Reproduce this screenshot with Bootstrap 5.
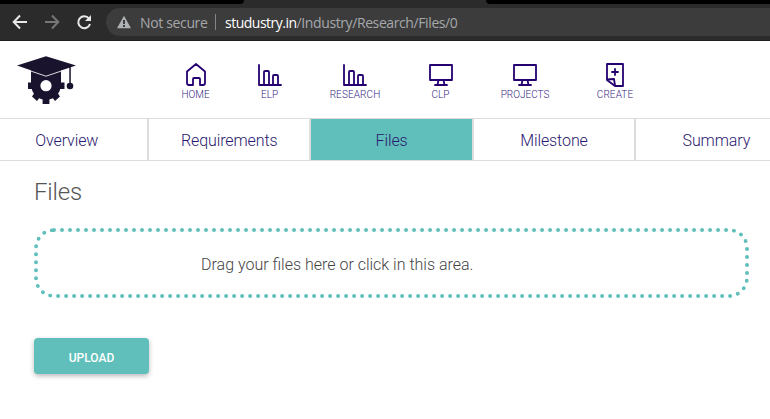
<!DOCTYPE html>
<html lang="en">
<head>
<meta charset="utf-8">
<meta name="viewport" content="width=device-width, initial-scale=1">
<title>Studustry - Files</title>
<link href="https://cdn.jsdelivr.net/npm/bootstrap@5.3.0/dist/css/bootstrap.min.css" rel="stylesheet">
<style>
body{font-family:Roboto,"Open Sans",sans-serif;font-weight:300;overflow:hidden;height:419px;background:#fff;color:#444}
.browser{height:41px;background:#2b2b2b;border-bottom:1px solid #1d1d1d}
.tabstrip{height:4px}
.strip-left{width:244px;background:#000;border-bottom-right-radius:5px}
.strip-right{width:284px;background:#000;border-bottom-left-radius:5px}
.toolbar{height:36px;padding-left:12px}
.omnibox{height:28px;margin-left:14px;background:#3c3c3c;border-radius:14px 0 0 14px;padding-left:10px;font:400 14px "Open Sans","Noto Sans",sans-serif;color:#a5a8ab;white-space:nowrap}
.omnibox .warn{letter-spacing:-.35px;width:67px;margin-left:8px}
.omnibox .sep{width:1px;height:16px;background:#83868a;margin:0 9px 0 8px}
.omnibox .host{color:#fff;letter-spacing:-.5px}
.omnibox .url{letter-spacing:-.4px}
.site-head{height:77px}
.brand{width:60px;margin:15px 0 0 16px}
.mainmenu{margin-left:105.5px;padding-top:20px;gap:51.5px}
.mainmenu a{color:#33257f;font-size:10px;line-height:12px;white-space:nowrap;display:flex;flex-direction:column;align-items:center}
.mainmenu svg{width:28px;height:28px;fill:none;stroke:#250070;stroke-width:1.8;stroke-linejoin:round;stroke-linecap:round;flex:none}
.mainmenu .m1{width:28px}.mainmenu .m2,.mainmenu .m4{width:17px}.mainmenu .m3{width:51px}.mainmenu .m5{width:49px}.mainmenu .m6{width:36px;margin-left:-4px}
.mainmenu .m3 span,.mainmenu .m6 span{letter-spacing:.1px}
.sections{height:43px;margin-left:-13.4px;width:813px;border:solid #ddd;border-width:1px 0;flex-wrap:nowrap}
.sections a{flex:0 0 162.4px;border-right:2px solid #ddd;color:#2a186f;font-size:16px;letter-spacing:-.1px;line-height:20px;padding:12px 0 0;text-align:center;border-radius:0}
.sections a.active{background:#60bfba}
.content{padding:16px 0 0 34px}
.title{font-size:24px;line-height:30px;font-weight:300;margin:0;color:#555;letter-spacing:-.2px}
.dropzone{width:715px;height:70px;margin-top:21px;border:4px dotted #60bfba;border-radius:20px;padding:3px 0 0 163px;font-size:16px;color:#444}
.upload{width:115px;height:36px;margin-top:40px;background:#60bfba;color:#fff;border:0;border-radius:4px;font-size:12px;font-weight:500;padding:3px 0 0;box-shadow:0 2px 5px rgba(0,0,0,.28)}
</style>
<script src="https://cdn.jsdelivr.net/npm/bootstrap@5.3.0/dist/js/bootstrap.bundle.min.js"></script>
</head>
<body>
<div class="browser">
  <div class="tabstrip d-flex justify-content-between"><div class="strip-left"></div><div class="strip-right"></div></div>
  <div class="toolbar d-flex align-items-center">
    <svg width="80" height="16" viewBox="0 0 80 16" fill="none" stroke-width="2">
      <path d="M15 8H2M8 1.500 1.700 8 8 14.500" stroke="#e8e8e8"/>
      <path d="M33 8h13M40 1.500 46.300 8 40 14.500" stroke="#777"/>
      <path d="M77 4.500A6 6 0 1 0 78 10" stroke="#e8e8e8"/><path d="M79 1v6h-6z" fill="#e8e8e8"/>
    </svg>
    <div class="omnibox d-flex align-items-center flex-grow-1">
      <svg width="16" height="14" viewBox="0 0 16 14"><path d="M8 .7 15 13.300H1z" fill="#aeb1b5"/><path d="M7 5h2v4H7zm0 5h2v2H7z" fill="#3c3c3c"/></svg>
      <span class="warn">Not secure</span><span class="sep"></span>
      <span class="url"><span class="host">studustry.in</span>/Industry/Research/Files/0</span>
    </div>
  </div>
</div>
<header class="site-head d-flex">
  <svg class="brand" height="49" viewBox="0 0 60 49">
    <g fill="#19132e">
      <path d="M15 14h30v16H15z"/>
      <circle cx="30" cy="29" r="14.800"/>
      <path d="M26.600 42h6.800v6h-6.800zM12 26.500h5v6.500h-5zM43 26.500h5.500v6.500H43z"/>
      <path d="M19 36l5 5-3 4-5-4.500zM41 36l-5 5 3 4 5-4.500z"/>
      <path d="M30 .3 60 9.500 30 19.500 1 9.500z"/>
      <path d="M53.300 10h1.500v18h-1.500z"/><circle cx="54" cy="30" r="3.300"/>
    </g>
    <circle cx="30" cy="29.700" r="5.600" fill="#fff"/>
    <path d="M14 14.800 30 20.200l16-5.400" fill="none" stroke="#ddd"/>
  </svg>
  <nav class="mainmenu d-flex">
    <a class="m1 text-decoration-none" href="#"><svg viewBox="0 0 28 28"><path d="M5 10.500 14 3l9 7.500V22q0 2-2 2h-3v-6q0-1-1-1h-5q-1 0-1 1v6H7q-2 0-2-2z"/></svg><span>HOME</span></a>
    <a class="m2 text-decoration-none" href="#"><svg viewBox="0 0 28 28"><path d="M3 4v20h22M8 24V11q0-1 1-1h3q1 0 1 1v13M17 24v-9q0-1 1-1h3q1 0 1 1v9"/></svg><span>ELP</span></a>
    <a class="m3 text-decoration-none" href="#"><svg viewBox="0 0 28 28"><path d="M3 4v20h22M8 24V11q0-1 1-1h3q1 0 1 1v13M17 24v-9q0-1 1-1h3q1 0 1 1v9"/></svg><span>RESEARCH</span></a>
    <a class="m4 text-decoration-none" href="#"><svg viewBox="0 0 28 28"><path d="M3 4h22v15H3zM11.500 19l-1 5M16.500 19l1 5M8 24h12"/></svg><span>CLP</span></a>
    <a class="m5 text-decoration-none" href="#"><svg viewBox="0 0 28 28"><path d="M3 4h22v15H3zM11.500 19l-1 5M16.500 19l1 5M8 24h12"/></svg><span>PROJECTS</span></a>
    <a class="m6 text-decoration-none" href="#"><svg viewBox="0 0 28 28"><path d="M6 3h16v22h-8l-8-6zM6 18.500l7-.5 1 6.500M14 8v6M11 11h6"/></svg><span>CREATE</span></a>
  </nav>
</header>
<nav class="sections nav">
  <a class="nav-link" href="#"><span>Overview</span></a>
  <a class="nav-link" href="#"><span>Requirements</span></a>
  <a class="nav-link active" href="#"><span>Files</span></a>
  <a class="nav-link" href="#"><span>Milestone</span></a>
  <a class="nav-link" href="#"><span>Summary</span></a>
</nav>
<main class="content">
  <h1 class="title">Files</h1>
  <div class="dropzone d-flex align-items-center"><span>Drag your files here or click in this area.</span></div>
  <button class="upload btn d-block" type="button">UPLOAD</button>
</main>
</body>
</html>
